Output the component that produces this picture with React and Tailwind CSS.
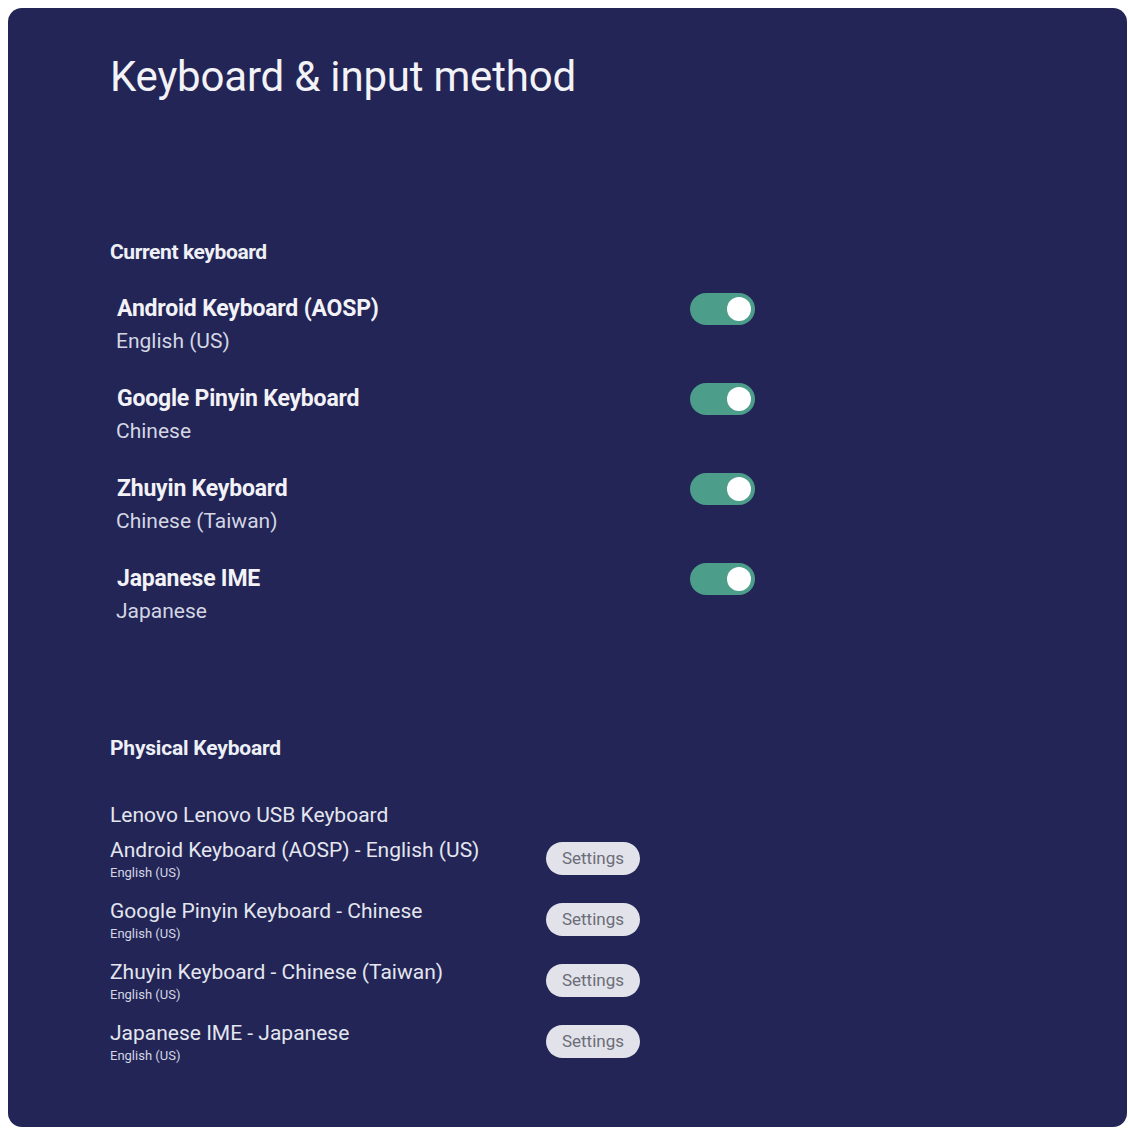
import { useState } from "react"

const teclados = [
  { nome: "Android Keyboard (AOSP)", idioma: "English (US)" },
  { nome: "Google Pinyin Keyboard", idioma: "Chinese" },
  { nome: "Zhuyin Keyboard", idioma: "Chinese (Taiwan)" },
  { nome: "Japanese IME", idioma: "Japanese" }
]

const fisicos = [
  "Android Keyboard (AOSP) - English (US)",
  "Google Pinyin Keyboard - Chinese",
  "Zhuyin Keyboard - Chinese (Taiwan)",
  "Japanese IME - Japanese"
]

function Toggle({ on, onClick }) {
  return (
    <button
      onClick={onClick}
      className={`relative w-[65px] h-[32px] rounded-full ${on ? "bg-[#4d9d8b]" : "bg-[#5a5d80]"}`}
    >
      <span
        className={`absolute top-[4px] w-[24px] h-[24px] rounded-full bg-white ${on ? "left-[37px]" : "left-[4px]"}`}
      />
    </button>
  )
}

export default function App() {
  const [ativos, setAtivos] = useState([true, true, true, true])

  return (
    <div className="bg-white w-full min-h-[1129px] p-2 pr-[1px] font-['Roboto',sans-serif]">
      <div className="bg-[#222556] rounded-[14px] h-[1119px] pl-[102px] pt-[45px]">
        {/* TITULO */}
        <h1 className="text-[42px] leading-[48px] text-[#f2f2f7] tracking-[-0.2px]">
          Keyboard &amp; input method
        </h1>

        {/* TECLADO ATUAL */}
        <h2 className="mt-[137px] text-[21px] leading-[28px] font-bold text-[#eef0f6] tracking-[-0.4px]">
          Current keyboard
        </h2>

        <div className="mt-[28px]">
          {teclados.map((t, i) => (
            <div key={t.nome} className="flex items-start h-[90px]">
              <div className="w-[580px] pl-[6px]">
                <p className="text-[23px] leading-[30px] font-bold text-[#f2f2f7] tracking-[-0.2px] pl-[1px]">
                  {t.nome}
                </p>
                <p className="mt-[3px] text-[21px] leading-[28px] text-[#d4d6e4]">
                  {t.idioma}
                </p>
              </div>
              <div className="mt-[-1px]">
                <Toggle
                  on={ativos[i]}
                  onClick={() =>
                    setAtivos(a => a.map((v, j) => (j === i ? !v : v)))
                  }
                />
              </div>
            </div>
          ))}
        </div>

        {/* TECLADO FISICO */}
        <h2 className="mt-[80px] text-[21px] leading-[28px] font-bold text-[#eef0f6] tracking-[-0.2px]">
          Physical Keyboard
        </h2>

        <p className="mt-[39px] text-[21px] leading-[28px] text-[#e4e6ef]">
          Lenovo Lenovo USB Keyboard
        </p>

        <div className="mt-[8px]">
          {fisicos.map(f => (
            <div key={f} className="flex items-start h-[61px]">
              <div className="w-[436px]">
                <p className="text-[21px] leading-[26px] text-[#e4e6ef]">{f}</p>
                <p className="mt-[2px] text-[13px] leading-[16px] text-[#d4d6e4]">
                  English (US)
                </p>
              </div>
              <button className="mt-[5px] w-[94px] h-[33px] rounded-full bg-[#e2e2ea] text-[17px] text-[#6b6d78]">
                Settings
              </button>
            </div>
          ))}
        </div>
      </div>
    </div>
  )
}
